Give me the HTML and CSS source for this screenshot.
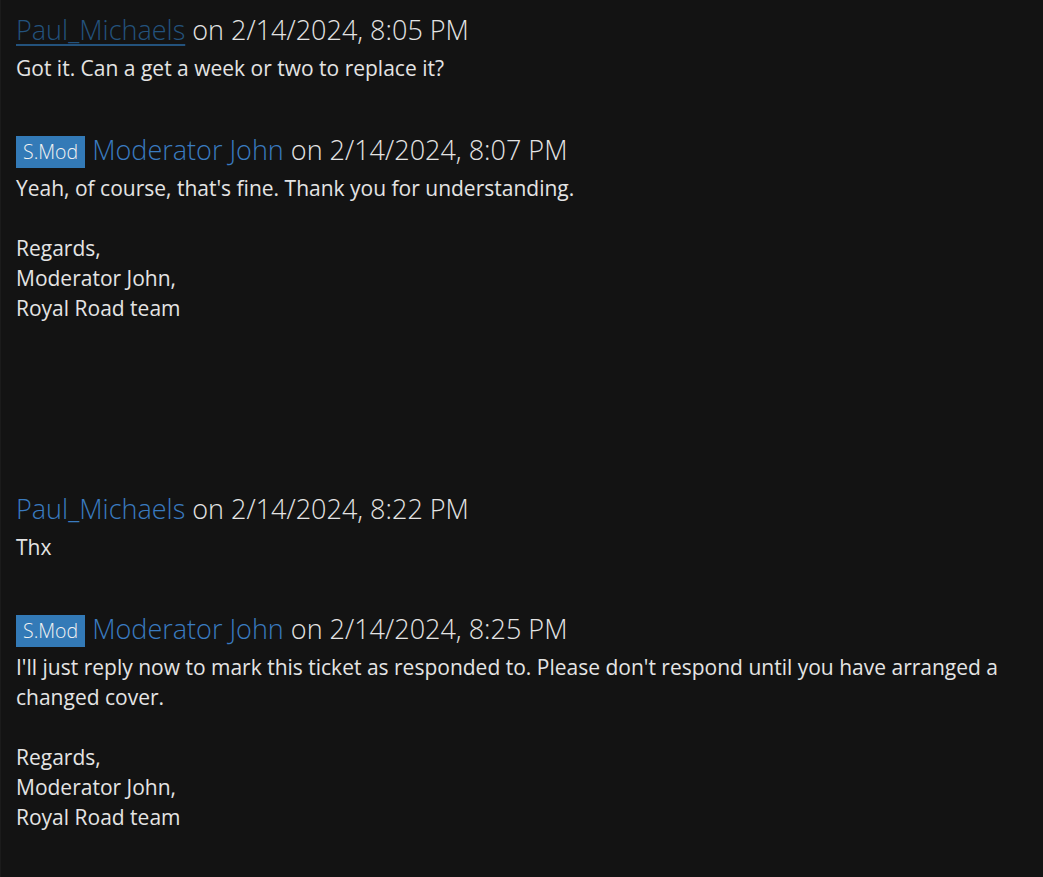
FILE: index.html
```html
<!DOCTYPE html>
<html>
<head>
<meta charset="utf-8">
<link rel="stylesheet" href="styles.css">
</head>
<body>
<div class="thread">
  <div class="msg">
    <div class="msg-head"><a class="user user-active" href="#">Paul_Michaels</a><span class="when">on 2/14/2024, 8:05 PM</span></div>
    <div class="msg-body"><p>Got it. Can a get a week or two to replace it?</p></div>
  </div>
  <div class="msg">
    <div class="msg-head"><span class="badge">S.Mod</span><a class="user" href="#">Moderator John</a><span class="when">on 2/14/2024, 8:07 PM</span></div>
    <div class="msg-body"><p>Yeah, of course, that's fine. Thank you for understanding.</p><p>Regards,<br>Moderator John,<br>Royal Road team</p><p class="spacer"></p></div>
  </div>
  <div class="msg">
    <div class="msg-head"><a class="user" href="#">Paul_Michaels</a><span class="when">on 2/14/2024, 8:22 PM</span></div>
    <div class="msg-body"><p>Thx</p></div>
  </div>
  <div class="msg">
    <div class="msg-head"><span class="badge">S.Mod</span><a class="user" href="#">Moderator John</a><span class="when">on 2/14/2024, 8:25 PM</span></div>
    <div class="msg-body"><p>I'll just reply now to mark this ticket as responded to. Please don't respond until you have arranged a changed cover.</p><p>Regards,<br>Moderator John,<br>Royal Road team</p></div>
  </div>
</div>
</body>
</html>
```

FILE: styles.css
```css
html, body {
  margin: 0;
  padding: 0;
  background: #131313;
  height: 100%;
}
body {
  font-family: "Open Sans", "Liberation Sans", sans-serif;
  color: #e4e4e4;
  border-left: 1px solid #1b1b1b;
  box-sizing: border-box;
}
.thread {
  padding: 14px 15px 0 15px;
  display: flex;
  flex-direction: column;
  gap: 51px;
}
.msg-head {
  font-size: 27px;
  font-weight: 300;
  line-height: 32px;
  height: 32px;
  color: #e4e4e4;
  display: flex;
  align-items: center;
  white-space: nowrap;
}
.when {
  margin-left: 7px;
}
.user {
  color: #3a7bc0;
  text-decoration: none;
}
.user-active {
  color: #23527c;
  text-decoration: underline;
  text-underline-offset: 4px;
  text-decoration-thickness: 2px;
}
.badge {
  display: inline-block;
  background: #337ab7;
  color: #f2f2f2;
  font-size: 19.5px;
  font-weight: 300;
  line-height: 32px;
  height: 32px;
  padding: 0 7px 0 7px;
  margin-top: 4px;
  margin-right: 7px;
}
.msg-body {
  margin-top: 7px;
  font-size: 21px;
  line-height: 30px;
}
.msg-body p {
  margin: 0 0 30px 0;
}
.msg-body p:last-child {
  margin-bottom: 0;
}
.msg-body .spacer {
  height: 89px;
}
```
